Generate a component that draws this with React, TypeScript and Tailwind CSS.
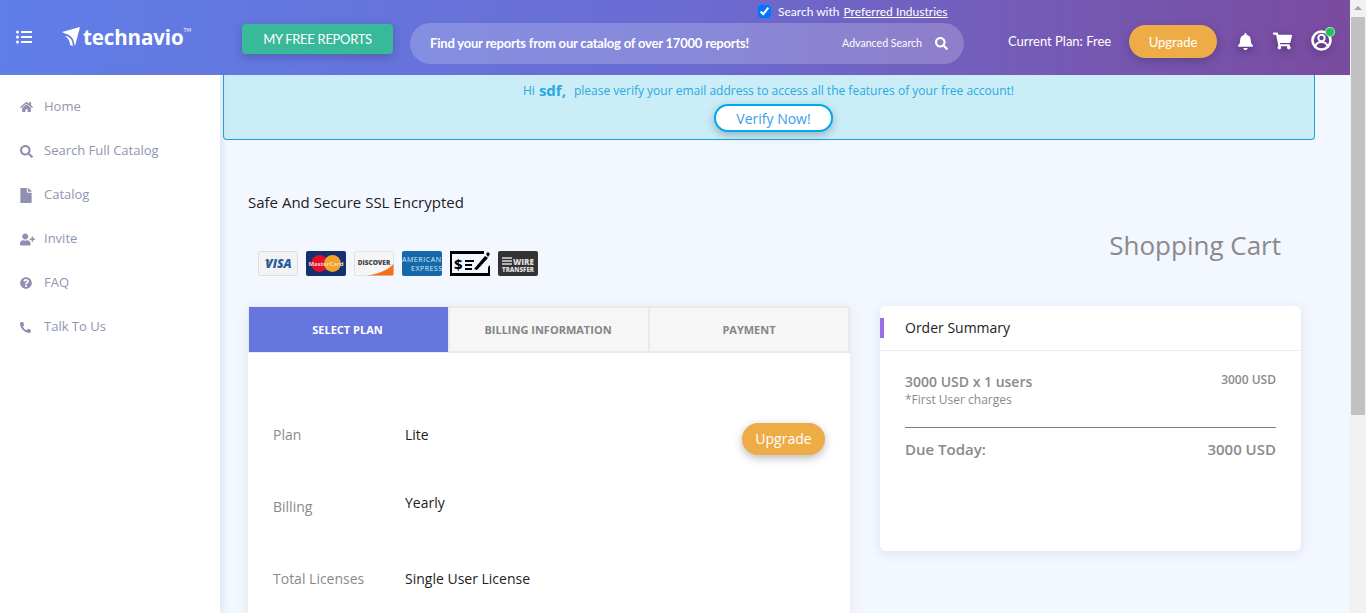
import React from 'react';
import {
  FaBell,
  FaFile,
  FaHome,
  FaListUl,
  FaPhoneAlt,
  FaQuestionCircle,
  FaSearch,
  FaShoppingCart,
  FaUserPlus,
} from 'react-icons/fa';

const navItems = [
  { label: 'Home', icon: FaHome, size: 'h-[12px] w-[13px]' },
  { label: 'Search Full Catalog', icon: FaSearch, size: 'h-[13px] w-[13px]' },
  { label: 'Catalog', icon: FaFile, size: 'h-[15px] w-[12px]' },
  { label: 'Invite', icon: FaUserPlus, size: 'h-[13px] w-[15px]' },
  { label: 'FAQ', icon: FaQuestionCircle, size: 'h-[12px] w-[12px]' },
  { label: 'Talk To Us', icon: FaPhoneAlt, size: 'h-[11px] w-[11px]' },
];

const iconShadow = 'drop-shadow-[0_3px_4px_rgba(30,20,70,0.45)]';

const Header: React.FC = () => (
  <header className="flex h-[75px] shrink-0 bg-gradient-to-r from-[#5f7ee9] via-[#6a6cd2] to-[#7a4b9f] text-white font-['Lato',sans-serif]">
    <div className="flex w-[242px] shrink-0 items-center pb-[1px] pl-4">
      <FaListUl className="h-[16px] w-[16px]" />
      <svg viewBox="0 0 18 19" className="mb-[1px] ml-[30px] h-[19px] w-[18px]" fill="white">
        <path d="M0 5 18 0 13 19 11 12C9 9 6 7 4 7Z" />
        <path d="M3 9C6 9 9 11 10 14L11 19 8 18C8 14 6 11 3 9Z" />
      </svg>
      <span className="ml-[3px] font-['Open_Sans',sans-serif] text-[20.5px] font-bold leading-none tracking-[-0.1px]">technavio</span>
      <span className="mb-3 text-[5px]">TM</span>
    </div>
    <div className="mt-6 flex h-[30px] w-[151px] shrink-0 items-center justify-center rounded bg-[#38b999] pt-[1px] text-[13px] tracking-[-0.3px] shadow-[0_3px_10px_rgba(40,40,90,0.3)]">
      MY FREE REPORTS
    </div>
    <div className="ml-[17px] flex w-[554px] shrink-0 flex-col">
      <label className="mt-[5px] flex h-[13px] items-center pl-[348px] text-[12px] leading-none">
        <input type="checkbox" defaultChecked className="h-[13px] w-[13px] accent-[#0075ff]" />
        <span className="ml-[7px]">Search with</span>
        <span className="ml-[4px] underline">Preferred Industries</span>
      </label>
      <div className="mt-[5px] flex h-[41px] items-center rounded-full bg-white/20 pl-5 pr-4">
        <span className="flex-1 text-[13px] font-bold tracking-[-0.2px]">Find your reports from our catalog of over 17000 reports!</span>
        <span className="text-[10.6px]">Advanced Search</span>
        <FaSearch className="ml-[13px] h-[13px] w-[13px]" />
      </div>
    </div>
    <div className="ml-11 mt-2 flex h-[66px] items-center text-[13px]">
      <span className="w-[121px] pt-[1px]">Current Plan: Free</span>
      <div className="flex h-[33px] w-[88px] items-center justify-center rounded-full bg-[#eeac47] pt-[3px] text-[13px] shadow-[0_3px_10px_rgba(40,40,90,0.35)]">
        Upgrade
      </div>
      <FaBell className={`ml-5 h-[17px] w-[17px] ${iconShadow}`} />
      <FaShoppingCart className={`ml-[19px] h-[18px] w-[19px] ${iconShadow}`} />
      <div className="relative mb-[2px] ml-[19px]">
        <svg viewBox="0 0 21 21" className={`h-[21px] w-[21px] ${iconShadow}`} fill="none" stroke="white">
          <circle cx="10.500" cy="10.500" r="9" strokeWidth="2.600" />
          <circle cx="10.500" cy="8" r="3.200" strokeWidth="2" />
          <path d="M4.500 16c1-3 3.500-4 6-4s5 1 6 4" strokeWidth="2.200" />
        </svg>
        <span className="absolute -right-[3px] -top-[3px] h-[10px] w-[10px] rounded-full border border-white/60 bg-[#1ec45b]" />
      </div>
    </div>
  </header>
);

const Sidebar: React.FC = () => (
  <aside className="z-10 w-[220px] shrink-0 bg-white pt-[10px] shadow-[0_0_10px_rgba(120,140,180,0.3)]">
    {navItems.map(({ label, icon: Icon, size }) => (
      <div key={label} className="flex h-[44px] items-center pl-5 text-[13px] text-[#8f95b2]">
        <span className="flex w-[24px] shrink-0">
          <Icon className={`${size} text-[#8f8fb0]`} />
        </span>
        {label}
      </div>
    ))}
  </aside>
);

const PayCards: React.FC = () => (
  <div className="flex gap-2">
    <svg viewBox="0 0 40 25" className="h-[25px] w-[40px]">
      <rect x="0.5" y="0.5" width="39" height="24" rx="2" fill="#f3f3f3" stroke="#ddd" />
      <path d="M6 9h5l2 4Z" fill="#e9a92c" />
      <text x="20.500" y="17" textAnchor="middle" fontSize="12" fontWeight="800" fontStyle="italic" fontFamily="Open Sans" fill="#1f5b9f">VISA</text>
    </svg>
    <svg viewBox="0 0 40 25" className="h-[25px] w-[40px]">
      <rect width="40" height="25" rx="2" fill="#15306f" />
      <circle cx="13.500" cy="12.500" r="8.500" fill="#e0102a" />
      <circle cx="26.500" cy="12.500" r="8.500" fill="#f3a32a" />
      <text x="20" y="14.500" textAnchor="middle" fontSize="6" fontWeight="700" fontFamily="Open Sans" fill="#f6d7c0">MasterCard</text>
    </svg>
    <svg viewBox="0 0 40 25" className="h-[25px] w-[40px]">
      <rect x="0.5" y="0.5" width="39" height="24" rx="2" fill="#f6f6f6" stroke="#e2e2e2" />
      <path d="M13 24.500C26 23 35 18 39.500 13V23a1.500 1.500 0 0 1-1.500 1.500Z" fill="#f47216" />
      <text x="20" y="13.500" textAnchor="middle" fontSize="6.500" fontWeight="800" fontFamily="Open Sans" fill="#444">DISCOVER</text>
    </svg>
    <svg viewBox="0 0 40 25" className="h-[25px] w-[40px]">
      <rect width="40" height="25" rx="2" fill="#1569a8" />
      <text x="0" y="10.500" fontSize="7" fontFamily="Open Sans" fill="#d6ecfa" textLength="39">AMERICAN</text>
      <text x="9" y="20" fontSize="7" fontFamily="Open Sans" fill="#d6ecfa" textLength="31">EXPRESS</text>
    </svg>
    <svg viewBox="0 0 40 25" className="h-[25px] w-[40px]">
      <path d="M0 0h34v3H2v19h36v-6l2-2v11H0Z" fill="#000" />
      <text x="4" y="19" fontSize="15" fontWeight="700" fontFamily="Open Sans" fill="#000">$</text>
      <path d="M15 10h9M15 14h7M15 18h7" stroke="#000" strokeWidth="1.800" />
      <path d="M24 18 35 5l3 2-11 12Z" fill="#000" />
      <path d="M36 3l2-2 2 2-2 3Z" fill="#000" />
    </svg>
    <svg viewBox="0 0 40 25" className="h-[25px] w-[40px]">
      <rect width="40" height="25" rx="2" fill="#333" />
      <path d="M4 7h10M4 10h10M4 13h10" stroke="#ddd" strokeWidth="1.300" />
      <text x="15" y="13.500" fontSize="8" fontWeight="800" fontFamily="Open Sans" fill="#ddd">WIRE</text>
      <text x="4" y="20.500" fontSize="6.200" fontWeight="800" fontFamily="Open Sans" fill="#ddd">TRANSFER</text>
    </svg>
  </div>
);

const Row: React.FC<{ label: string; value: string; labelClass?: string; children?: React.ReactNode; className?: string }> = ({
  label,
  value,
  labelClass,
  children,
  className,
}) => (
  <div className={`flex items-start pl-[25px] pr-[25px] text-[14px] leading-5 ${className ?? ''}`}>
    <span className={`w-[132px] shrink-0 text-[#8a8a8a] ${labelClass ?? ''}`}>{label}</span>
    <span className="flex-1 text-[#222]">{value}</span>
    {children}
  </div>
);

const PlanPanel: React.FC = () => (
  <div className="w-[602px] shrink-0 bg-white shadow-[0_2px_12px_rgba(120,140,180,0.15)]">
    <div className="flex h-[47px] text-[11px] font-bold uppercase">
      <div className="flex w-[200px] items-center justify-center border border-r-0 border-[#e9ecf0] bg-[#6776de] pr-[2px] pt-[1px] text-white">Select Plan</div>
      <div className="flex w-[200px] items-center justify-center border-2 border-r-0 border-[#e9e9e9] bg-[#f6f6f6] pr-[2px] pt-[1px] text-[#858585]">Billing Information</div>
      <div className="flex w-[202px] items-center justify-center border-2 border-[#e9e9e9] bg-[#f6f6f6] pt-[1px] text-[#858585]">Payment</div>
    </div>
    <Row label="Plan" value="Lite" className="pt-[72px]">
      <button className="-mt-[2px] h-[32px] w-[83px] rounded-full bg-[#eeac47] text-[14px] text-white shadow-[0_3px_8px_rgba(60,60,60,0.35)]">Upgrade</button>
    </Row>
    <Row label="Billing" value="Yearly" labelClass="mt-1" className="pt-[38px]" />
    <Row label="Total Licenses" value="Single User License" className="pt-[52px] pb-10" />
  </div>
);

const OrderSummary: React.FC = () => (
  <div className="h-[245px] w-[421px] shrink-0 rounded-md bg-white shadow-[0_2px_12px_rgba(120,140,180,0.2)]">
    <div className="flex h-[45px] items-center border-b border-[#eeeeee] pb-[1px]">
      <span className="h-[20px] w-[4px] bg-[#9d6bea]" />
      <span className="ml-[21px] text-[14px] text-[#222]">Order Summary</span>
    </div>
    <div className="px-[25px] pt-[21px] text-[#8a8a8a]">
      <div className="flex justify-between border-b border-[#7c7c7c] pb-[19px]">
        <div>
          <div className="text-[14px] font-semibold leading-5">3000 USD x 1 users</div>
          <div className="text-[12px] leading-[16px]">*First User charges</div>
        </div>
        <div className="text-[12px] font-semibold leading-[16px]">3000 USD</div>
      </div>
      <div className="mt-[11px] flex justify-between text-[15px] font-semibold leading-5">
        <span>Due Today:</span>
        <span>3000 USD</span>
      </div>
    </div>
  </div>
);

export default function App() {
  return (
    <div className="flex h-[613px] overflow-hidden bg-[#f3f7ff] font-['Open_Sans',sans-serif]">
      <div className="flex w-[1350px] shrink-0 flex-col">
        <Header />
        <div className="flex min-h-0 flex-1">
          <Sidebar />
          <main className="min-w-0 flex-1">
            <section className="ml-[3px] flex h-[65px] w-[1092px] flex-col items-center rounded-b border border-t-0 border-[#18a5c9] bg-[#cbedf7] pr-[1px] text-[12px] text-[#2aa9df]">
              <p className="flex h-[30px] items-center pt-[1px]">
                Hi <b className="ml-1 mr-2 text-[15px]">sdf,</b> please verify your email address to access all the features of your free account!
              </p>
              <button className="-mt-[1px] ml-[10px] h-[28px] w-[119px] rounded-full border-2 border-[#00a8f0] bg-white text-[14px] text-[#3a9ee8] shadow-[0_3px_8px_rgba(60,90,110,0.4)]">Verify Now!</button>
            </section>
            <div className="pl-[28px]">
              <p className="mt-[52px] text-[15px] leading-5 text-[#222]">Safe And Secure SSL Encrypted</p>
              <div className="flex w-[1033px] items-start justify-between pl-[10px]">
                <div className="pt-[39px]"><PayCards /></div>
                <h2 className="pt-[15px] text-[26px] leading-9 text-[#8a8a8a]">Shopping Cart</h2>
              </div>
              <div className="mt-[30px] flex gap-[30px]">
                <PlanPanel />
                <OrderSummary />
              </div>
            </div>
          </main>
        </div>
      </div>
      <div className="flex w-[16px] shrink-0 flex-col items-center bg-[#f1f1f1]">
        <span className="mt-[6px] h-0 w-0 border-x-[4px] border-b-[4px] border-x-transparent border-b-[#a3a3a3]" />
        <div className="mt-[7px] h-[398px] w-[14px] bg-[#c1c1c1]" />
      </div>
    </div>
  );
}
